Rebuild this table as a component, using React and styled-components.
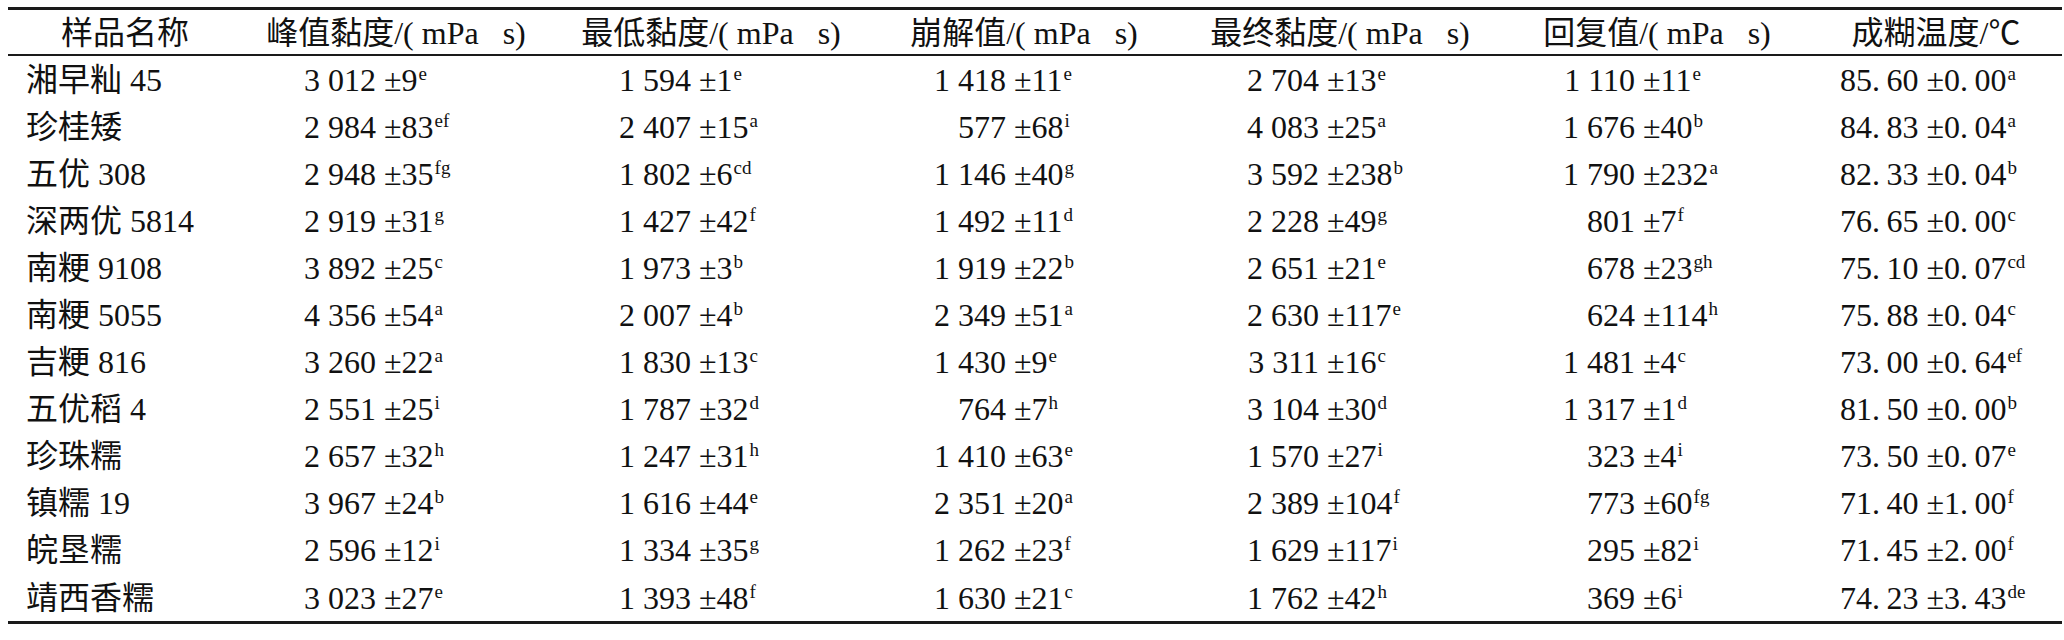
import React from "react";
import styled, { createGlobalStyle } from "styled-components";

const Global = createGlobalStyle`
  html, body { margin: 0; padding: 0; background: #fff; }
  body { font-family: "Liberation Serif", "Noto Sans CJK SC", serif; color: #111; }
`;

const COLS = "234px 308px 322px 304px 328px 306px 252px";

const Page = styled.div`
  padding: 7px 2px 0 8px;
`;

const Table = styled.div`
  width: 2054px;
  display: flex;
  flex-direction: column;
  border-top: 3px solid #1a1a1a;
  border-bottom: 3px solid #1a1a1a;
  font-family: "Liberation Serif", "Noto Sans CJK SC", serif;
  font-size: 32px;
  color: #111;
`;

const HeadRow = styled.div`
  display: grid;
  grid-template-columns: ${COLS};
  height: 44px;
  border-bottom: 2px solid #1a1a1a;
`;

const HeadCell = styled.div`
  display: flex;
  align-items: center;
  justify-content: center;
  white-space: pre;
  line-height: 1;
  padding-top: 2px;
`;

const Row = styled.div`
  display: grid;
  grid-template-columns: ${COLS};
  height: 47.1px;
`;

const Cell = styled.div`
  display: flex;
  align-items: center;
  padding-left: ${(p) => p.$pad}px;
  white-space: pre;
  line-height: 1;
`;

const Value = styled.span`
  display: block;
  line-height: 1;
`;

const Mean = styled.span`
  display: inline-block;
  width: ${(p) => (p.$w ? `${p.$w}px` : "auto")};
  text-align: right;
`;

const Pm = styled.span`
  margin-left: 8px;
`;

const Sup = styled.span`
  font-size: 19px;
  line-height: 1;
  vertical-align: 11px;
  margin-left: 1px;
`;

const headers = [
  "样品名称",
  "峰值黏度/( mPa\u00a0\u00a0\u00a0s)",
  "最低黏度/( mPa\u00a0\u00a0\u00a0s)",
  "崩解值/( mPa\u00a0\u00a0\u00a0s)",
  "最终黏度/( mPa\u00a0\u00a0\u00a0s)",
  "回复值/( mPa\u00a0\u00a0\u00a0s)",
  "成糊温度/℃",
];

const colCfg = [
  { pad: 18 },
  { pad: 62, w: 72 },
  { pad: 69, w: 72 },
  { pad: 62, w: 72 },
  { pad: 71, w: 72 },
  { pad: 59, w: 72 },
  { pad: 30, w: 0 },
];

const rows = [
  ["湘早籼 45", ["3 012", "9", "e"], ["1 594", "1", "e"], ["1 418", "11", "e"], ["2 704", "13", "e"], ["1 110", "11", "e"], ["85.60", "0.00", "a"]],
  ["珍桂矮", ["2 984", "83", "ef"], ["2 407", "15", "a"], ["577", "68", "i"], ["4 083", "25", "a"], ["1 676", "40", "b"], ["84.83", "0.04", "a"]],
  ["五优 308", ["2 948", "35", "fg"], ["1 802", "6", "cd"], ["1 146", "40", "g"], ["3 592", "238", "b"], ["1 790", "232", "a"], ["82.33", "0.04", "b"]],
  ["深两优 5814", ["2 919", "31", "g"], ["1 427", "42", "f"], ["1 492", "11", "d"], ["2 228", "49", "g"], ["801", "7", "f"], ["76.65", "0.00", "c"]],
  ["南粳 9108", ["3 892", "25", "c"], ["1 973", "3", "b"], ["1 919", "22", "b"], ["2 651", "21", "e"], ["678", "23", "gh"], ["75.10", "0.07", "cd"]],
  ["南粳 5055", ["4 356", "54", "a"], ["2 007", "4", "b"], ["2 349", "51", "a"], ["2 630", "117", "e"], ["624", "114", "h"], ["75.88", "0.04", "c"]],
  ["吉粳 816", ["3 260", "22", "a"], ["1 830", "13", "c"], ["1 430", "9", "e"], ["3 311", "16", "c"], ["1 481", "4", "c"], ["73.00", "0.64", "ef"]],
  ["五优稻 4", ["2 551", "25", "i"], ["1 787", "32", "d"], ["764", "7", "h"], ["3 104", "30", "d"], ["1 317", "1", "d"], ["81.50", "0.00", "b"]],
  ["珍珠糯", ["2 657", "32", "h"], ["1 247", "31", "h"], ["1 410", "63", "e"], ["1 570", "27", "i"], ["323", "4", "i"], ["73.50", "0.07", "e"]],
  ["镇糯 19", ["3 967", "24", "b"], ["1 616", "44", "e"], ["2 351", "20", "a"], ["2 389", "104", "f"], ["773", "60", "fg"], ["71.40", "1.00", "f"]],
  ["皖垦糯", ["2 596", "12", "i"], ["1 334", "35", "g"], ["1 262", "23", "f"], ["1 629", "117", "i"], ["295", "82", "i"], ["71.45", "2.00", "f"]],
  ["靖西香糯", ["3 023", "27", "e"], ["1 393", "48", "f"], ["1 630", "21", "c"], ["1 762", "42", "h"], ["369", "6", "i"], ["74.23", "3.43", "de"]],
];

const fmt = (s) => s.replace(".", ".\u2009");

export default function App() {
  return (
    <Page>
      <Global />
      <Table>
        <HeadRow>
          {headers.map((h) => (
            <HeadCell key={h}>{h}</HeadCell>
          ))}
        </HeadRow>
        {rows.map((r) => (
          <Row key={r[0]}>
            <Cell $pad={colCfg[0].pad}>{r[0]}</Cell>
            {r.slice(1).map(([m, sd, sup], i) => (
              <Cell key={i} $pad={colCfg[i + 1].pad}>
                <Value>
                  <Mean $w={colCfg[i + 1].w}>{fmt(m)}</Mean>
                  <Pm>±{fmt(sd)}</Pm>
                  <Sup>{sup}</Sup>
                </Value>
              </Cell>
            ))}
          </Row>
        ))}
      </Table>
    </Page>
  );
}
